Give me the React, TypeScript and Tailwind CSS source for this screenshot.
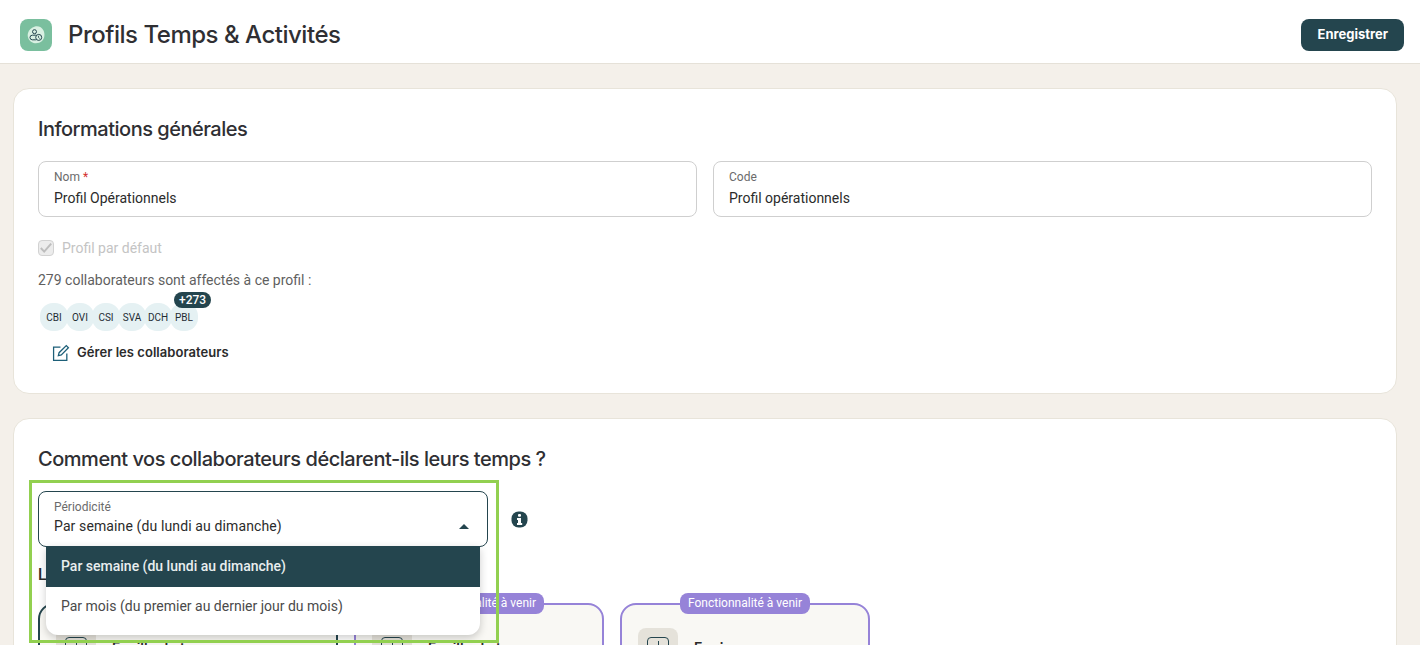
import React from "react";

function Logo() {
  return (
    <div className="flex h-8 w-8 shrink-0 items-center justify-center rounded-lg bg-[#7abf9e]">
      <svg width="22" height="22" viewBox="0 0 22 22" fill="none">
        <path d="M10 2.500c3.500-.8 7 .8 8.500 4 1.600 3.300 1.300 8-1.500 10.500-2.800 2.500-7.500 3-10.500 1-3-2-4.500-5.500-3.500-9 .8-3 3.500-5.800 7-6.500z" fill="#d9f0e2" />
        <circle cx="9.500" cy="7.700" r="2" stroke="#24454e" strokeWidth="1" />
        <rect x="5" y="11.200" width="8" height="4.600" rx="2.300" stroke="#24454e" strokeWidth="1" />
        <circle cx="13.700" cy="13.400" r="3" fill="#d9f0e2" stroke="#24454e" strokeWidth="1" />
        <path d="M13.500 11.800v1.700l1.200 1" stroke="#24454e" strokeWidth="0.800" />
      </svg>
    </div>
  );
}

function Field({ label, value, required }: { label: string; value: string; required?: boolean }) {
  return (
    <div className="h-14 flex-1 rounded-lg border border-[#cfcfcf] bg-white px-[15px] pt-[7px]">
      <div className="text-xs leading-4 text-[#6b6b6b]">
        {label}
        {required && <span className="text-[#d32f2f]"> *</span>}
      </div>
      <div className="mt-[3px] text-sm leading-5 text-[#2b2b2b]">{value}</div>
    </div>
  );
}

function Avatar({ text, badge }: { text: string; badge?: string }) {
  return (
    <div className="relative -mr-[2px] flex h-7 w-7 items-center justify-center rounded-[13px] bg-[#e5f1f3] text-[10px] text-[#1f2d33]">
      {text}
      {badge && (
        <span className="absolute -top-[11px] left-[4px] rounded-full bg-[#24454e] px-[5px] text-xs font-medium leading-4 text-white">
          {badge}
        </span>
      )}
    </div>
  );
}

function CardIcon() {
  return (
    <div className="flex h-10 w-10 shrink-0 items-start justify-center rounded-lg bg-[#e5e2da] pt-[9px]">
      <div className="flex h-5 w-[22px] justify-center rounded-sm border border-[#24454e] pt-[3px]">
        <div className="h-3 w-px bg-[#24454e]" />
      </div>
    </div>
  );
}

function SoonCard({ title }: { title: string }) {
  return (
    <div className="relative h-[120px] w-[250px] shrink-0 rounded-2xl border-2 border-[#9683d8] bg-[#f9f8f4]">
      <span className="absolute -top-[12px] left-[58px] whitespace-nowrap rounded-lg bg-[#9683d8] px-[8px] text-xs leading-[21px] text-white">
        Fonctionnalité à venir
      </span>
      <div className="flex items-start gap-4 pl-4 pt-[23px]">
        <CardIcon />
        <div className="pt-[10px] text-sm font-semibold leading-5 text-[#2b2b2b] font-['Inter',sans-serif]">{title}</div>
      </div>
    </div>
  );
}

export default function App() {
  return (
    <div className="relative h-[645px] w-[1420px] overflow-hidden bg-[#f4f0ea] font-['Roboto',sans-serif]">
      <header className="flex h-[64px] items-center justify-between border-b border-[#e5e1d8] bg-white pl-5 pr-4 pt-[6px]">
        <div className="flex items-center gap-4">
          <Logo />
          <h1 className="pt-px text-2xl font-medium tracking-[-0.48px] text-[#2f2f33] font-['Inter',sans-serif]">Profils Temps &amp; Activités</h1>
        </div>
        <button className="h-8 rounded-lg bg-[#24454e] px-4 text-[13px] font-bold text-white font-['Inter',sans-serif]">
          Enregistrer
        </button>
      </header>

      <main className="flex flex-col gap-[24px] pl-[13px] pr-[23px] pt-[24px]">
        <section className="h-[306px] rounded-2xl border border-[#e8e4da] bg-white px-6 pt-[28px]">
          <h2 className="text-xl font-medium leading-6 tracking-[-0.5px] text-[#2f2f33] font-['Inter',sans-serif]">Informations générales</h2>
          <div className="mt-[20px] flex gap-4">
            <Field label="Nom" value="Profil Opérationnels" required />
            <Field label="Code" value="Profil opérationnels" />
          </div>
          <label className="mt-[21px] flex items-center gap-2 text-sm leading-5 text-[#c4c4c4]">
            <span className="flex h-4 w-4 items-center justify-center rounded-[4px] border-[1.5px] border-[#d2d2d2] bg-[#ececec]">
              <svg width="14" height="14" viewBox="0 0 14 14" fill="none" className="shrink-0">
                <path d="M1.800 7l3.400 3.600 7-8" stroke="#bdbdbd" strokeWidth="2" />
              </svg>
            </span>
            Profil par défaut
          </label>
          <p className="mt-3 text-sm leading-5 text-[#5f5f5f]">279 collaborateurs sont affectés à ce profil :</p>
          <div className="mt-[13px] flex pl-[2px]">
            {["CBI", "OVI", "CSI", "SVA", "DCH"].map((t) => (
              <Avatar key={t} text={t} />
            ))}
            <Avatar text="PBL" badge="+273" />
          </div>
          <div className="mt-[12px] flex items-center gap-[7px] pl-[14px] text-[13px] font-semibold tracking-[0.04px] text-[#2b2b2b] font-['Inter',sans-serif]">
            <svg width="18" height="18" viewBox="0 0 17 17" fill="none" stroke="#1d5f78" strokeWidth="1.200">
              <path d="M8 3H1.500v12.500H14V9" />
              <path d="M6 11l.7-2.800L13.500 1.500l2 2-6.700 6.800z" />
            </svg>
            Gérer les collaborateurs
          </div>
        </section>

        <section className="h-[400px] rounded-2xl border border-[#e8e4da] bg-white px-6 pt-[28px]">
          <h2 className="text-xl font-medium leading-6 tracking-[-0.47px] text-[#2f2f33] font-['Inter',sans-serif]">Comment vos collaborateurs déclarent-ils leurs temps ?</h2>
          <div className="mt-[20px] flex items-center gap-[23px]">
            <div className="h-14 w-[450px] rounded-lg border border-[#24454e] px-[15px] pt-[7px]">
              <div className="text-xs leading-4 text-[#6b6b6b]">Périodicité</div>
              <div className="mt-px flex items-center justify-between pr-[3px] text-sm leading-5 tracking-[0.12px] text-[#2b2b2b]">
                Par semaine (du lundi au dimanche)
                <span className="h-0 w-0 border-x-[5.5px] border-b-[5px] border-x-transparent border-b-[#24454e]" />
              </div>
            </div>
            <svg width="17" height="17" viewBox="0 0 17 17">
              <rect x="0.500" y="0.500" width="16" height="16" rx="7" fill="#24454e" />
              <rect x="7" y="3" width="3" height="2.800" rx="1" fill="#fff" />
              <path d="M6 7h4v5h1.200v2H6v-2h1V9H6z" fill="#fff" />
            </svg>
          </div>
          <div className="mt-[18px] text-base font-medium leading-5 text-[#2b2b2b]">Les</div>
          <div className="mt-[18px] flex gap-4">
            <div className="relative h-[120px] w-[300px] shrink-0 rounded-2xl border-2 border-[#24454e] bg-[#f9f8f4]">
              <div className="flex items-start gap-4 pl-4 pt-[23px]">
                <CardIcon />
                <div className="pt-[10px] text-sm font-semibold leading-5 text-[#2b2b2b] font-['Inter',sans-serif]">Feuille de temps</div>
              </div>
            </div>
            <SoonCard title="Feuille de temps" />
            <SoonCard title="Equipe" />
          </div>
        </section>
      </main>

      <div className="absolute left-[46px] top-[546px] w-[434px] rounded-b-xl bg-white pb-[8px] text-sm shadow-[0_3px_8px_rgba(0,0,0,0.2)]">
        <div className="flex h-[41px] items-center bg-[#24454e] pb-[2px] pl-[15px] font-medium text-[#e9eeef]">Par semaine (du lundi au dimanche)</div>
        <div className="flex h-[40px] items-center pb-[2px] pl-[15px] text-[#4a4a4a]">Par mois (du premier au dernier jour du mois)</div>
      </div>
      <div className="pointer-events-none absolute left-[29px] top-[480px] h-[163px] w-[470px] border-[3px] border-[#92d050]" />
    </div>
  );
}
